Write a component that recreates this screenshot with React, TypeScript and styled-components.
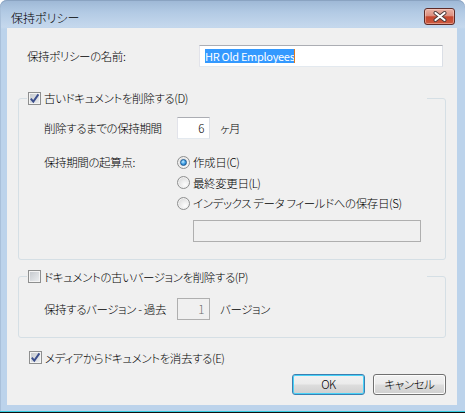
import React from 'react';
import styled, { createGlobalStyle } from 'styled-components';

const GlobalStyle = createGlobalStyle`
  html, body {
    margin: 0;
    padding: 0;
    background: #fff;
  }
  body {
    font-family: "Noto Sans CJK JP", "Noto Sans", sans-serif;
    font-size: 11.5px;
    font-weight: 300;
    letter-spacing: -0.4px;
    font-feature-settings: "palt" 1;
    color: #000;
  }
`;

const Screen = styled.div`
  width: 466px;
  height: 416px;
  overflow: hidden;
  background: #fff;
`;

const Frame = styled.div`
  width: 465px;
  height: 412px;
  box-sizing: border-box;
  display: flex;
  flex-direction: column;
  border-radius: 7px 7px 0 0;
  border-bottom: 1px solid #35cde0;
  background: linear-gradient(#9db7d5 0px, #b2cae4 12px, #c5d8ed 27px, #bcd3eb 29px, #bcd3eb 100%);
  box-shadow: inset 0 1px 0 #8aa3c1, inset 1px 0 0 #a9c0da;
`;

const BottomLine = styled.div`
  height: 1px;
  width: 465px;
  background: #111;
`;

const TitleBar = styled.div`
  height: 28px;
  flex: none;
  display: flex;
  align-items: flex-start;
  justify-content: space-between;
  padding: 0 10px 0 11px;
`;

const Title = styled.div`
  margin-top: 10px;
  line-height: 16px;
  font-size: 12px;
  letter-spacing: 0;
`;

const CloseButton = styled.div`
  margin-top: 8px;
  width: 31px;
  height: 17px;
  box-sizing: border-box;
  border: 1px solid #5e2b27;
  border-radius: 3px;
  background: linear-gradient(#eab3a6 0%, #dc8f7f 45%, #c5472f 52%, #cc5a40 100%);
  box-shadow: inset 0 0 0 1px rgba(255, 220, 210, 0.45);
  display: flex;
  align-items: center;
  justify-content: center;
`;

const Client = styled.div`
  flex: 1;
  margin: 0 8px 6px 7px;
  background: #f0f0f0;
  display: flex;
  flex-direction: column;
`;

const NameRow = styled.div`
  display: flex;
  align-items: center;
  justify-content: space-between;
  margin: 17px 14px 0 20px;
  height: 22px;
`;

const Label = styled.span`
  white-space: nowrap;
  line-height: 14px;
`;

const TextBox = styled.div<{ $w: number; $disabled?: boolean; $right?: boolean; $ml?: number }>`
  width: ${p => p.$w}px;
  height: 22px;
  flex: none;
  margin-left: ${p => p.$ml ?? 0}px;
  box-sizing: border-box;
  border: 1px solid;
  border-color: ${p => (p.$disabled ? '#afafaf' : '#abadb3 #dbdfe6 #e3e9ef #e2e3ea')};
  background: ${p => (p.$disabled ? '#f0f0f0' : '#fff')};
  color: ${p => (p.$disabled ? '#6d6d6d' : '#000')};
  display: flex;
  align-items: center;
  justify-content: ${p => (p.$right ? 'flex-end' : 'flex-start')};
  padding: 0 5px 0 5px;
  line-height: 14px;
  white-space: nowrap;
`;

const Selected = styled.span`
  background: #3399ff;
  color: #fff;
  line-height: 14px;
  font-size: 11px;
  font-weight: 400;
  letter-spacing: -0.3px;
`;

const Caret = styled.span`
  width: 1px;
  height: 14px;
  background: #e07a1f;
`;

const Group = styled.fieldset<{ $mt: number }>`
  margin: ${p => p.$mt}px 11px 0 11px;
  padding: 0;
  min-width: 0;
  border: 1px solid #d5dfe5;
  border-radius: 3px;
`;

const Legend = styled.legend`
  width: 400px;
  height: 14px;
  margin-left: 8px;
  padding: 0;
`;

const CheckLine = styled.div<{ $mt?: number; $ml?: number }>`
  display: flex;
  align-items: center;
  gap: 3px;
  height: 14px;
  margin: ${p => p.$mt ?? 0}px 0 0 ${p => p.$ml ?? 0}px;
  padding-left: 1px;
`;

const GroupBody = styled.div<{ $pt: number }>`
  padding: ${p => p.$pt}px 0 17px 25px;
  display: flex;
  flex-direction: column;
`;

const FieldRow = styled.div<{ $top?: boolean; $mt?: number }>`
  display: flex;
  align-items: ${p => (p.$top ? 'flex-start' : 'center')};
  margin-top: ${p => p.$mt ?? 0}px;
`;

const FieldLabel = styled.span`
  width: 133px;
  flex: none;
  white-space: nowrap;
  line-height: 20px;
`;

const Unit = styled.span`
  margin-left: 10px;
  white-space: nowrap;
`;

const RadioList = styled.div`
  display: flex;
  flex-direction: column;
`;

const RadioRow = styled.div`
  height: 20.5px;
  display: flex;
  align-items: center;
  gap: 3px;
  white-space: nowrap;
`;

const Box = styled.span`
  width: 13px;
  height: 13px;
  flex: none;
  box-sizing: border-box;
  border: 1px solid #8e8f8f;
  background: linear-gradient(135deg, #c3c7cc 0%, #eef0f2 100%);
  box-shadow: inset 0 0 0 1px #f4f4f4;
  display: flex;
  align-items: center;
  justify-content: center;
`;

const Round = styled.span`
  width: 13px;
  height: 13px;
  flex: none;
  box-sizing: border-box;
  border-radius: 50%;
  border: 1px solid #8e8f8f;
  background: radial-gradient(circle at 65% 70%, #fdfdfd 0%, #e4e4e4 60%, #cfcfcf 100%);
  box-shadow: inset 0 0 0 1px #f2f2f2;
  display: flex;
  align-items: center;
  justify-content: center;
`;

const Dot = styled.span`
  width: 7px;
  height: 7px;
  box-sizing: border-box;
  border-radius: 50%;
  border: 1px solid #1d5a92;
  background: radial-gradient(circle at 40% 35%, #c8ecff 0%, #4aa8ea 45%, #0c5ba8 100%);
`;

const Footer = styled.div`
  display: flex;
  justify-content: flex-end;
  gap: 8px;
  margin: 9px 11px 0 0;
`;

const Button = styled.div<{ $default?: boolean }>`
  width: 73px;
  height: 21px;
  box-sizing: border-box;
  border: 1px solid ${p => (p.$default ? '#3c7fb1' : '#707070')};
  border-radius: 3px;
  background: linear-gradient(#f2f2f2 0%, #ebebeb 48%, #dddddd 52%, #cfcfcf 100%);
  box-shadow: ${p => (p.$default ? 'inset 0 0 0 1px #48d2f8' : 'inset 0 0 0 1px #fcfcfc')};
  display: flex;
  align-items: center;
  justify-content: center;
  line-height: 14px;
`;

const CheckMark = () => (
  <svg width="11" height="11" viewBox="0 0 11 11">
    <path d="M1.8 5.6 L4.3 8.6 L9.4 1.4" fill="none" stroke="#3b4e8c" strokeWidth="1.9" />
  </svg>
);

const Check = ({ checked }: { checked?: boolean }) => <Box>{checked && <CheckMark />}</Box>;

const Radio = ({ checked }: { checked?: boolean }) => <Round>{checked && <Dot />}</Round>;

const CloseGlyph = () => (
  <svg width="14" height="11" viewBox="0 0 14 11">
    <path d="M2.5 2 L11.5 9 M11.5 2 L2.5 9" stroke="#4a3a3a" strokeWidth="4" strokeLinecap="round" />
    <path d="M2.5 2 L11.5 9 M11.5 2 L2.5 9" stroke="#fff" strokeWidth="2.2" strokeLinecap="round" />
  </svg>
);

export default function App() {
  return (
    <Screen>
      <GlobalStyle />
      <Frame>
        <TitleBar>
          <Title>保持ポリシー</Title>
          <CloseButton>
            <CloseGlyph />
          </CloseButton>
        </TitleBar>
        <Client>
          <NameRow>
            <Label>保持ポリシーの名前:</Label>
            <TextBox $w={244}>
              <Selected>HR Old Employees</Selected>
              <Caret />
            </TextBox>
          </NameRow>

          <Group $mt={24}>
            <Legend>
              <CheckLine>
                <Check checked />
                <Label>古いドキュメントを削除する(D)</Label>
              </CheckLine>
            </Legend>
            <GroupBody $pt={12}>
              <FieldRow>
                <FieldLabel>削除するまでの保持期間</FieldLabel>
                <TextBox $w={33} $right>6</TextBox>
                <Unit>ヶ月</Unit>
              </FieldRow>
              <FieldRow $top $mt={13}>
                <FieldLabel>保持期間の起算点:</FieldLabel>
                <RadioList>
                  <RadioRow>
                    <Radio checked />
                    <Label>作成日(C)</Label>
                  </RadioRow>
                  <RadioRow>
                    <Radio />
                    <Label>最終変更日(L)</Label>
                  </RadioRow>
                  <RadioRow>
                    <Radio />
                    <Label>インデックス データ フィールドへの保存日(S)</Label>
                  </RadioRow>
                </RadioList>
              </FieldRow>
              <FieldRow $mt={6}>
                <FieldLabel />
                <TextBox $w={228} $ml={16} $disabled />
              </FieldRow>
            </GroupBody>
          </Group>

          <Group $mt={10}>
            <Legend>
              <CheckLine>
                <Check />
                <Label>ドキュメントの古いバージョンを削除する(P)</Label>
              </CheckLine>
            </Legend>
            <GroupBody $pt={14}>
              <FieldRow>
                <FieldLabel>保持するバージョン - 過去</FieldLabel>
                <TextBox $w={33} $right $disabled>1</TextBox>
                <Unit>バージョン</Unit>
              </FieldRow>
            </GroupBody>
          </Group>

          <CheckLine $mt={13} $ml={21}>
            <Check checked />
            <Label>メディアからドキュメントを消去する(E)</Label>
          </CheckLine>

          <Footer>
            <Button $default>OK</Button>
            <Button>キャンセル</Button>
          </Footer>
        </Client>
      </Frame>
      <BottomLine />
    </Screen>
  );
}
